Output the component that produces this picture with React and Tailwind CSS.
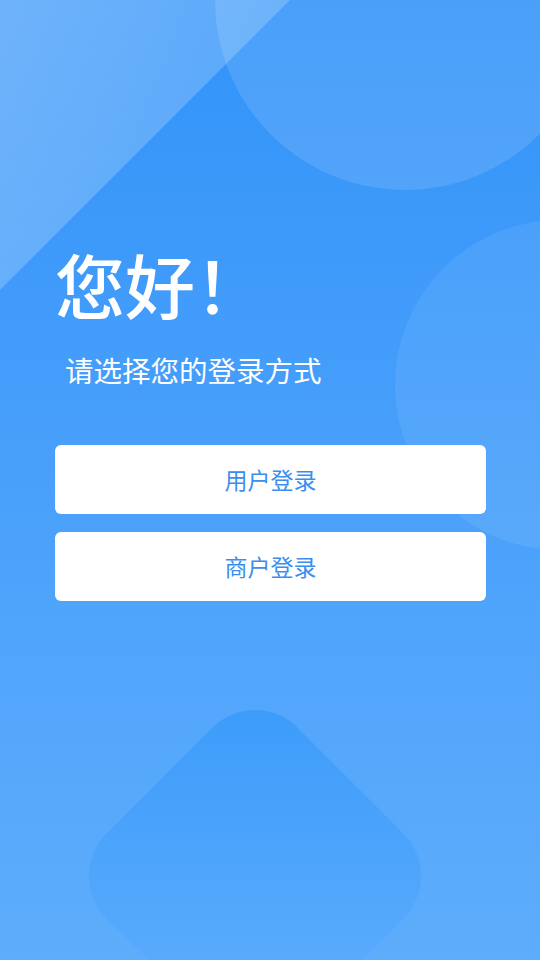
export default function App() {
  return (
    <div
      className="relative w-full h-[960px] overflow-hidden bg-gradient-to-b from-[#3193f9] to-[#5eadfc]"
      style={{ fontFamily: '"Noto Sans CJK SC", "Noto Sans", sans-serif' }}
    >
      {/* 背景装饰 */}
      <div className="absolute left-0 top-0 w-[300px] h-[300px] bg-gradient-to-br from-white/30 to-white/10 [clip-path:polygon(0_0,290px_0,0_290px)]" />
      <div className="absolute left-[215px] top-[-190px] w-[380px] h-[380px] rounded-full bg-white/12" />
      <div className="absolute left-[395px] top-[220px] w-[330px] h-[330px] rounded-full bg-white/7" />
      <div className="absolute left-[120px] top-[741px] w-[270px] h-[270px] rounded-[60px] rotate-45 bg-gradient-to-br from-[#3a9bfa] to-[#62b0fd]" />

      {/* 内容 */}
      <div className="relative flex flex-col pl-[55px] pr-[54px] pt-[249px]">
        <h1 className="text-[70px] leading-none text-white font-medium">您好！</h1>
        <p className="ml-[10px] mt-[37px] text-[28.5px] leading-none text-white">请选择您的登录方式</p>

        <div className="mt-[60px] flex flex-col gap-[18px]">
          <button className="h-[69px] w-full rounded-md bg-white text-[23px] text-[#3a8ef0]">用户登录</button>
          <button className="h-[69px] w-full rounded-md bg-white text-[23px] text-[#3a8ef0]">商户登录</button>
        </div>
      </div>
    </div>
  );
}
